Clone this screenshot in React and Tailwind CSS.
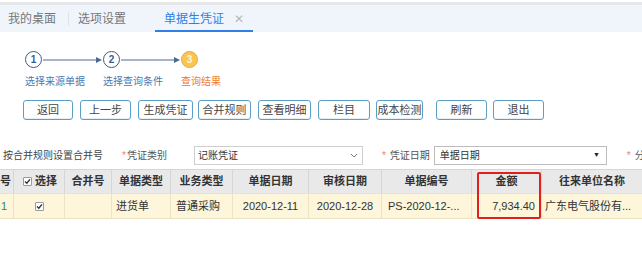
import React from "react";

const buttons = [
  { label: "返回", cls: "w-[50px] ml-0" },
  { label: "上一步", cls: "w-[51px] ml-[7px]" },
  { label: "生成凭证", cls: "w-[55px] ml-[7px]" },
  { label: "合并规则", cls: "w-[53px] ml-[5px]" },
  { label: "查看明细", cls: "w-[53px] ml-[7px]" },
  { label: "栏目", cls: "w-[52px] ml-[7px]" },
  { label: "成本检测", cls: "w-[47px] ml-[6px]" },
  { label: "刷新", cls: "w-[51px] ml-[13px]" },
  { label: "退出", cls: "w-[51px] ml-[6px]" },
];

const Arrow = () => (
  <svg width="61" height="8" viewBox="0 0 61 8" className="shrink-0">
    <line x1="1" y1="4" x2="56" y2="4" stroke="#4a6a95" strokeWidth="1" />
    <polygon points="54,1 60,4 54,7" fill="#4a6a95" />
  </svg>
);

const Check = ({ className = "" }) => (
  <span
    className={`flex shrink-0 items-center justify-center w-[9px] h-[9px] border border-[#9a9a9a] bg-white rounded-[1px] ${className}`}
  >
    <svg width="7" height="7" viewBox="0 0 7 7">
      <path d="M1 3.6 L2.8 5.3 L6 1.4" fill="none" stroke="#333" strokeWidth="1.4" />
    </svg>
  </span>
);

const Step = ({ n, active }) => (
  <div
    className={`w-[17px] h-[17px] shrink-0 rounded-full border-[1.5px] flex items-center justify-center text-[10px] font-bold leading-none ${
      active ? "bg-[#fbc64e] border-[#f2a43a] text-[#fff6e0]" : "bg-white border-[#3b5b8c] text-[#3b5b8c]"
    }`}
  >
    {n}
  </div>
);

export default function App() {
  return (
    <div className="w-[642px] h-[258px] overflow-hidden whitespace-nowrap bg-white font-['Liberation_Sans','Noto_Sans_CJK_SC',sans-serif] text-[#333]">
      {/* top strip */}
      <div className="pt-[2px]">
        <div className="h-[3px] bg-[#e6e7e8]" />
      </div>

      {/* tab bar */}
      <div className="h-[27px] bg-[#f0f5fc] flex items-stretch pl-[8px] text-[12px]">
        <div className="flex items-center text-[#777]">我的桌面</div>
        <div className="flex items-center ml-[12px]">
          <div className="w-px h-[14px] bg-[#dde3ea]" />
        </div>
        <div className="flex items-center ml-[9px] text-[#777]">选项设置</div>
        <div className="flex items-center ml-[29px] pl-[9px] pr-[9px] border-b-2 border-[#2f7fe6]">
          <span className="text-[#2f7fe6] mt-[2px]">单据生凭证</span>
          <span className="ml-[10px] text-[#b8b8b8] text-[12px] mt-[2px]">✕</span>
        </div>
      </div>

      {/* stepper */}
      <div className="flex items-center pl-[25px] mt-[19px]">
        <Step n="1" />
        <Arrow />
        <Step n="2" />
        <Arrow />
        <Step n="3" active />
      </div>
      <div className="flex pl-[25px] gap-[18px] mt-[8px] text-[10px] leading-[12px]">
        <span className="w-[60px] text-[#4a78b5]">选择来源单据</span>
        <span className="w-[60px] text-[#4a78b5]">选择查询条件</span>
        <span className="text-[#f07a1e]">查询结果</span>
      </div>

      {/* buttons */}
      <div className="flex pl-[23px] mt-[12px]">
        {buttons.map((b) => (
          <button
            key={b.label}
            className={`h-[20px] shrink-0 border border-[#5c9fc6] rounded-[3px] bg-white text-[11px] text-[#444] flex items-center justify-center shadow-[inset_0_-1px_0_#e3eef5] ${b.cls}`}
          >
            {b.label}
          </button>
        ))}
      </div>

      {/* filter row */}
      <div className="flex items-center mt-[26px] pl-[3px] text-[10px] h-[19px]">
        <span className="shrink-0 text-[#444]">按合并规则设置合并号</span>
        <span className="shrink-0 ml-[19px] text-[#f08080]">*</span>
        <span className="shrink-0 ml-[1px] text-[#555]">凭证类别</span>
        <div className="shrink-0 ml-[27px] w-[169px] h-[19px] border border-[#cfcfcf] flex items-center justify-between pl-[3px] pr-[4px]">
          <span className="text-[#333]">记账凭证</span>
          <svg width="8" height="5" viewBox="0 0 8 5">
            <path d="M1 1 L4 4 L7 1" fill="none" stroke="#777" strokeWidth="1" />
          </svg>
        </div>
        <span className="shrink-0 ml-[19px] text-[#f08080]">*</span>
        <span className="shrink-0 ml-[4px] text-[#555]">凭证日期</span>
        <div className="shrink-0 ml-[4px] w-[173px] h-[19px] border border-[#bdbdbd] flex items-center justify-between pl-[5px] pr-[6px]">
          <span className="text-[#333]">单据日期</span>
          <span className="text-[7px] text-[#222]">▼</span>
        </div>
        <span className="shrink-0 ml-[20px] text-[#f08080]">*</span>
        <span className="shrink-0 ml-[4px] text-[#555]">分</span>
      </div>

      {/* table */}
      <div className="relative mt-[4px] w-[700px]">
        <div className="grid grid-cols-[14px_51px_47px_59px_62px_76px_73px_90px_70px_120px] h-[24px] bg-[#e9e9ea] border-t border-[#d6d6d6] text-[11px] font-bold text-[#333]">
          <div className="flex items-center border-r border-[#d6d6d6]">号</div>
          <div className="flex items-center pl-[9px] border-r border-[#d6d6d6]">
            <Check />
            <span className="ml-[3px]">选择</span>
          </div>
          <div className="flex items-center justify-center border-r border-[#d6d6d6]">合并号</div>
          <div className="flex items-center justify-center border-r border-[#d6d6d6]">单据类型</div>
          <div className="flex items-center justify-center border-r border-[#d6d6d6]">业务类型</div>
          <div className="flex items-center justify-center border-r border-[#d6d6d6]">单据日期</div>
          <div className="flex items-center justify-center border-r border-[#d6d6d6]">审核日期</div>
          <div className="flex items-center justify-center border-r border-[#d6d6d6]">单据编号</div>
          <div className="flex items-center justify-center border-r border-[#d6d6d6]">金额</div>
          <div className="flex items-center pl-[17px]">往来单位名称</div>
        </div>
        <div className="grid grid-cols-[14px_51px_47px_59px_62px_76px_73px_90px_70px_120px] h-[26px] bg-[#fdf6da] border-y border-[#ebe3c3] text-[11px] text-[#333]">
          <div className="flex items-center border-r border-[#ebe3c3] text-[#2e8b57] pl-[1px]">1</div>
          <div className="flex items-center justify-center border-r border-[#ebe3c3]">
            <Check />
          </div>
          <div className="border-r border-[#ebe3c3]" />
          <div className="flex items-center pl-[4px] border-r border-[#ebe3c3]">进货单</div>
          <div className="flex items-center pl-[5px] border-r border-[#ebe3c3]">普通采购</div>
          <div className="flex items-center justify-center border-r border-[#ebe3c3]">2020-12-11</div>
          <div className="flex items-center justify-center border-r border-[#ebe3c3]">2020-12-28</div>
          <div className="flex items-center pl-[6px] border-r border-[#ebe3c3]">PS-2020-12-...</div>
          <div className="flex items-center justify-end pr-[6px] border-r border-[#ebe3c3]">7,934.40</div>
          <div className="flex items-center pl-[3px]">广东电气股份有...</div>
        </div>
        <div className="absolute left-[477px] top-[3px] w-[64px] h-[47px] border-2 border-[#e0201c] rounded-[2px]" />
      </div>
    </div>
  );
}
